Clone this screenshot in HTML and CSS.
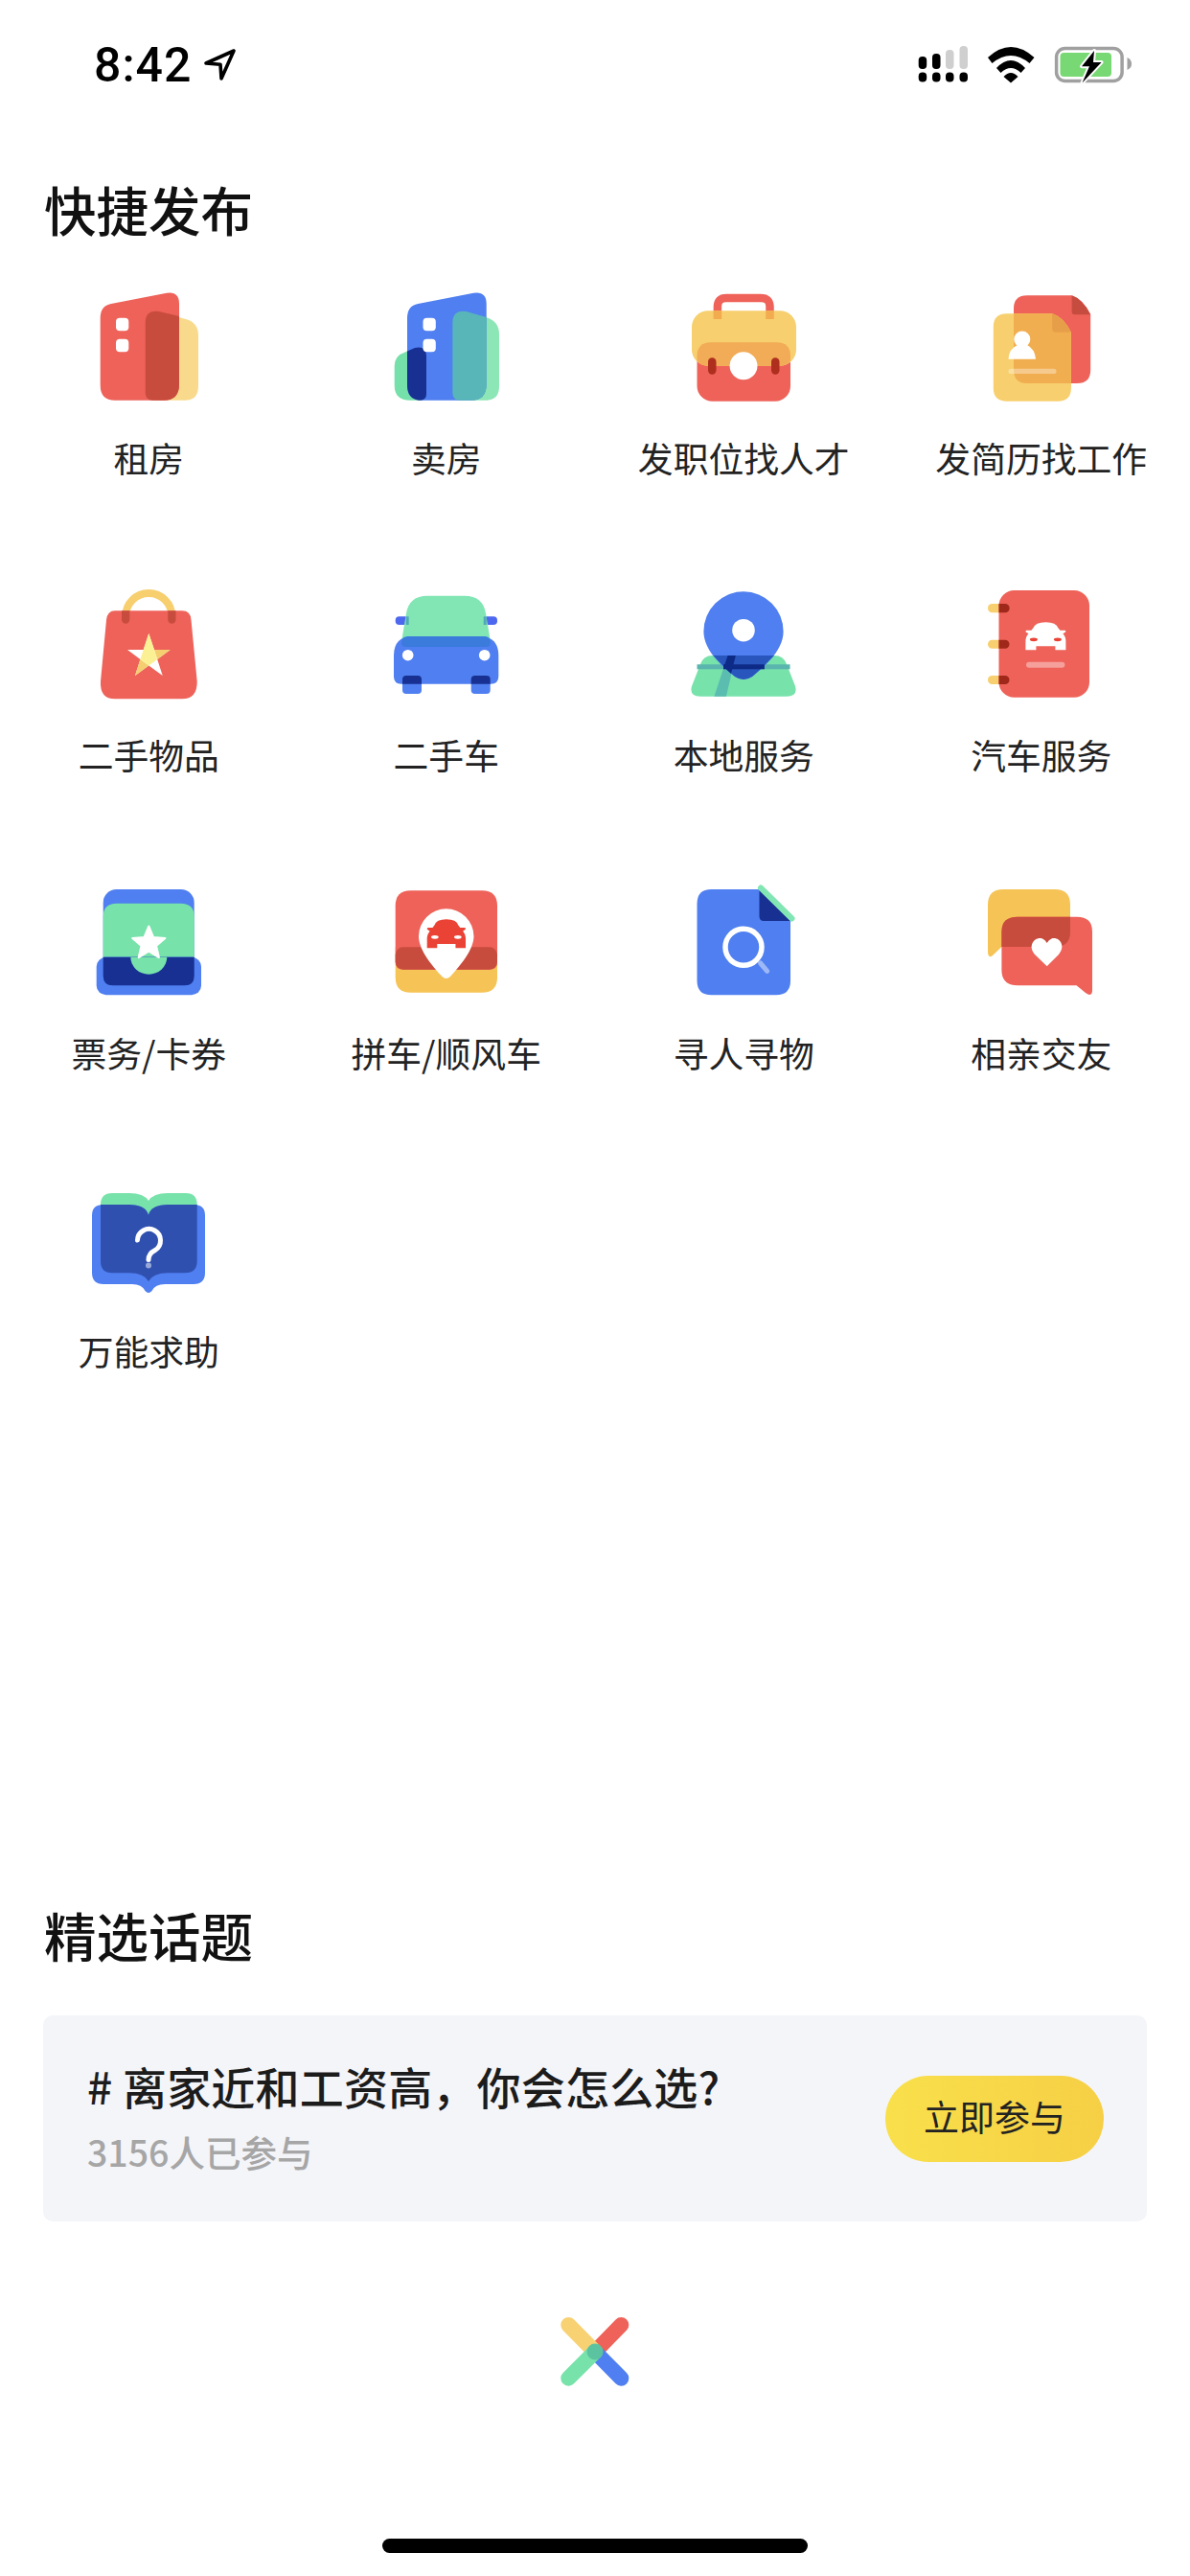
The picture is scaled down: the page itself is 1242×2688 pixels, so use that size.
FILE: index.html
```html
<!DOCTYPE html>
<html lang="zh-CN">
<head>
<meta charset="utf-8">
<title>快捷发布</title>
<link rel="stylesheet" href="styles.css">
</head>
<body>
<div class="page">
  <header class="status">
    <div class="time-wrap">
      <span class="time">8:42</span>
      <svg class="arrow" viewBox="210 48 40 40"><path d="M244 53 L215 66 L230 67.2 L231 82 Z" fill="none" stroke="#000" stroke-width="3.6" stroke-linejoin="round"/></svg>
    </div>
    <svg class="sys" viewBox="950 40 240 56">
      <g fill="#000">
        <rect x="958.7" y="59" width="8.5" height="13" rx="4"/><rect x="973" y="56" width="8.5" height="16" rx="4"/>
        <rect x="958.7" y="75.5" width="8.5" height="10" rx="4"/><rect x="973" y="75.5" width="8.5" height="10" rx="4"/><rect x="987" y="75.5" width="8.5" height="10" rx="4"/><rect x="1001.5" y="75.5" width="8.5" height="10" rx="4"/>
      </g>
      <rect x="987" y="52" width="8.5" height="20" rx="4" fill="#cfcfcf"/><rect x="1001.5" y="48" width="8.5" height="24" rx="4" fill="#cfcfcf"/>
      <path d="M1031 60 Q1055 38 1079.5 60 L1074.5 66 Q1055 50 1035.5 66Z M1040 71 Q1055 55 1070 71 L1065.5 76 Q1055 66 1044.5 76Z M1047.5 80 Q1055 72 1062.5 80 L1055 86.5Z" fill="#000"/>
      <rect x="1102.6" y="50.5" width="68.5" height="34" rx="9" fill="none" stroke="#a0a0a0" stroke-width="3.5"/>
      <rect x="1106.5" y="55" width="53.5" height="25" rx="4" fill="#78d873"/>
      <path d="M1176.5 60 Q1181 62 1181 66.5 Q1181 71 1176.5 73Z" fill="#a0a0a0"/>
      <path class="bolt" d="M1142 53 L1129 69.3 L1137 69.3 L1129.5 86.5 L1149.6 65 L1141 65 Z"/>
    </svg>
  </header>

  <h2 class="section-title title-quick">快捷发布</h2>

  <section class="grid">
    <div class="cell">
      <svg class="icon" viewBox="84 295 140 140">
        <path d="M151.7 337 Q151.7 323 166 325 L193 332.7 Q207 336 207 350 V403 Q207 417.7 193 417.7 H160 Q151.7 417.7 151.7 410 Z" fill="#f9da8d"/>
        <path d="M104.7 332 Q104.7 319 116 317 L174 305.7 Q187 303.7 187 317 V401 Q187 417.7 171 417.7 H120 Q104.7 417.7 104.7 402 Z" fill="#ee6259"/>
        <path d="M151.7 337 Q151.7 323 166 325 L187 330 V401 Q187 417.7 171 417.7 H160 Q151.7 417.7 151.7 410 Z" fill="#c84c3e"/>
        <rect x="121" y="331.7" width="13.3" height="13.6" rx="4" fill="#fff"/><rect x="121" y="353.7" width="13.3" height="13.6" rx="4" fill="#fff"/>
      </svg>
      <span class="label">租房</span>
    </div>
    <div class="cell">
      <svg class="icon" viewBox="395 295 140 140">
        <path d="M411.7 382 Q411.7 371 423.3 367.3 L433 363 Q445 360.5 445 372 V411 Q445 417.7 438 417.7 H428 Q411.7 417.7 411.7 402 Z" fill="#75e0a9"/>
        <path d="M472.3 337 Q472.3 323 486.5 325 L507 331 Q521 335 521 349 V403 Q521 417.7 507 417.7 H480.5 Q472.3 417.7 472.3 410 Z" fill="#8ce6b5"/>
        <path d="M425 332 Q425 319 436.3 317 L494.3 305.7 Q507.7 303.7 507.7 317 V401 Q507.7 417.7 491.7 417.7 H440.7 Q425 417.7 425 402 Z" fill="#4f7ff0"/>
        <path d="M472.3 337 Q472.3 323 486.5 325 L507.7 331 V401 Q507.7 417.7 491.7 417.7 H480.5 Q472.3 417.7 472.3 410 Z" fill="#58b6b9"/>
        <path d="M425 366.5 L433 363 Q445 360.5 445 372 V411 Q445 417.7 438 417.7 Q425 416.5 425 402 Z" fill="#173092"/>
        <rect x="441.5" y="331.7" width="13.3" height="13.6" rx="4" fill="#fff"/><rect x="441.5" y="353.7" width="13.3" height="13.6" rx="4" fill="#fff"/>
      </svg>
      <span class="label">卖房</span>
    </div>
    <div class="cell">
      <svg class="icon" viewBox="705 295 140 140">
        <path d="M748.9 333 V320 Q748.9 311 758 311 H794 Q803.5 311 803.5 320 V333" fill="none" stroke="#ee6259" stroke-width="8.5"/>
        <rect x="727.5" y="340" width="97.5" height="78.7" rx="16" fill="#ee6259"/>
        <rect x="722" y="324.3" width="109" height="57.4" rx="17" fill="#f7cf6e"/>
        <rect x="744.6" y="324.3" width="8.6" height="8.7" fill="#f2ab4f"/><rect x="799.2" y="324.3" width="8.6" height="8.7" fill="#f2ab4f"/>
        <path d="M727.5 372 Q727.5 357.3 742 357.3 H810.5 Q825 357.3 825 372 V376 Q822 381.7 813 381.7 H740 Q730 381.7 727.5 376 Z" fill="#f2ab56"/>
        <rect x="739" y="373.3" width="8.5" height="17.4" rx="4.2" fill="#ae2f1e"/><rect x="805" y="373.3" width="8.5" height="17.4" rx="4.2" fill="#ae2f1e"/>
        <circle cx="776" cy="381.7" r="14.5" fill="#fff"/>
      </svg>
      <span class="label">发职位找人才</span>
    </div>
    <div class="cell">
      <svg class="icon" viewBox="1016 295 140 140">
        <path d="M1072 308.3 H1118.6 Q1130 312 1138.2 328 V386 Q1138.2 400 1124 400 H1072 Q1058 400 1058 386 V322 Q1058 308.3 1072 308.3 Z" fill="#ee6259"/>
        <path d="M1118.6 308.3 Q1130 312 1138.2 328.3 H1122 Q1118.6 328.3 1118.6 325 Z" fill="#c74c40"/>
        <path d="M1051 327.3 H1098.2 Q1110 331 1117.9 346.7 V405 Q1117.9 418.7 1104 418.7 H1051 Q1036.8 418.7 1036.8 405 V341 Q1036.8 327.3 1051 327.3 Z" fill="#f7cf6e"/>
        <path d="M1058 327.3 H1098.2 Q1110 331 1117.9 346.7 V400 H1072 Q1058 400 1058 386 Z" fill="#f1ae50"/>
        <path d="M1098.2 327.3 Q1110 331 1117.9 346.7 H1102 Q1098.2 346.7 1098.2 343 Z" fill="#e79e48"/>
        <circle cx="1066.8" cy="354" r="8.5" fill="#fff"/>
        <path d="M1052.5 374.7 Q1053 364 1062 360 H1072 Q1080 364 1081 374.7 Z" fill="#fff"/>
        <rect x="1052.5" y="384.7" width="50" height="5.4" rx="2.7" fill="#fff" fill-opacity=".35"/>
      </svg>
      <span class="label">发简历找工作</span>
    </div>

    <div class="cell">
      <svg class="icon" viewBox="84 605 140 140">
        <path d="M131.2 645 V643 A24 24 0 0 1 179.3 643 V645" fill="none" stroke="#f7cf6e" stroke-width="8"/>
        <path d="M120 637.3 H190 Q199 637.3 199.5 647 L205.7 711 Q206 729.3 190 729.3 H120 Q104 729.3 105 711 L111 647 Q112 637.3 120 637.3 Z" fill="#ee6259"/>
        <path d="M127 637.3 H135.3 V646.5 A4.1 4.1 0 0 1 127 646.5 Z M175.2 637.3 H183.5 V646.5 A4.1 4.1 0 0 1 175.2 646.5 Z" fill="#c84c3e"/>
        <polygon points="155.3,661 161,678 177.7,678 164.2,688 169.7,705 155.3,694.5 141,705 146.4,688 133,678 149.7,678" fill="#fff"/>
        <polygon points="161,678 177.7,678 164.2,688" fill="#f4ce6f"/>
        <polygon points="155.3,694.5 141,705 146.4,688" fill="#f4ce6f"/>
        <polygon points="155.3,661 161,678 164.2,688 155.3,694.5 146.4,688 149.7,678" fill="#fbf094"/>
      </svg>
      <span class="label">二手物品</span>
    </div>
    <div class="cell">
      <svg class="icon" viewBox="395 605 140 140">
        <rect x="412.7" y="643.3" width="14" height="8.7" rx="4" fill="#4d68ee"/><rect x="504.7" y="643.3" width="14.3" height="8.7" rx="4" fill="#4d68ee"/>
        <path d="M419.3 668 L424 640 Q427 621.7 446 621.7 H485 Q504 621.7 507 640 L511.7 668 V672 Q511.7 675 508 675 H423 Q419.3 675 419.3 672 Z" fill="#82e6b4"/>
        <rect x="423.7" y="643.3" width="3" height="8.7" fill="#50a9b9"/><rect x="504.7" y="643.3" width="3" height="8.7" fill="#50a9b9"/>
        <rect x="420" y="700" width="20" height="24" rx="4" fill="#4f7ff0"/><rect x="491.7" y="700" width="20" height="24" rx="4" fill="#4f7ff0"/>
        <path d="M411 684 Q411 664 431 664 H500 Q520.3 664 520.3 684 V706 Q520.3 713.7 512 713.7 H419 Q411 713.7 411 706 Z" fill="#4f7ff0"/>
        <path d="M426 664 H505 Q511.7 664 511.7 670 V671 Q511.7 675 507 675 H424 Q419.3 675 419.3 671 V670 Q419.3 664 426 664 Z" fill="#3a7bdc"/>
        <circle cx="425.7" cy="683.7" r="5.8" fill="#fff"/><circle cx="505.7" cy="683.7" r="5.8" fill="#fff"/>
        <path d="M424 705 H436 Q440 705 440 709 V713.7 H420 V709 Q420 705 424 705 Z M495.7 705 H507.7 Q511.7 705 511.7 709 V713.7 H491.7 V709 Q491.7 705 495.7 705 Z" fill="#173092"/>
      </svg>
      <span class="label">二手车</span>
    </div>
    <div class="cell">
      <svg class="icon" viewBox="705 605 140 140">
        <path d="M744 684 H808 Q818 684 821 693 L830 716 Q833 726.7 821 726.7 H731 Q719 726.7 722 716 L731 693 Q734 684 744 684 Z" fill="#77e2aa"/>
        <rect x="727.5" y="693.3" width="97" height="5" fill="#5ab5ae"/>
        <polygon points="759.6,684 767.9,684 757.9,726.7 745.4,726.7" fill="#5bbcb0"/>
        <path d="M776 617.3 A41.6 41.6 0 0 1 817.6 659 C817.6 680 795 698 785 706 Q776 712 767 706 C757 698 734.4 680 734.4 659 A41.6 41.6 0 0 1 776 617.3 Z" fill="#4f7ff0"/>
        <path d="M744.6 684 H807.9 C800 692 792 700 785 706 Q776 712 767 706 C760 700 752 692 744.6 684 Z" fill="#2956bd"/>
        <rect x="755" y="693.3" width="42.9" height="5" fill="#0c2a86"/>
        <polygon points="759.6,684 767.9,684 763,703 755.5,696" fill="#0c2a86"/>
        <circle cx="776" cy="657.7" r="11.8" fill="#fff"/>
      </svg>
      <span class="label">本地服务</span>
    </div>
    <div class="cell">
      <svg class="icon" viewBox="1016 605 140 140">
        <rect x="1031" y="630" width="22.6" height="9.3" rx="4.6" fill="#f7cf6e"/><rect x="1031" y="667.7" width="22.6" height="9" rx="4.5" fill="#f7cf6e"/><rect x="1031" y="705" width="22.6" height="9" rx="4.5" fill="#f7cf6e"/>
        <rect x="1042.5" y="616" width="94.5" height="111.7" rx="16" fill="#ee6259"/>
        <path d="M1042.5 630 H1049 A4.6 4.6 0 0 1 1049 639.3 H1042.5 Z M1042.5 667.7 H1049 A4.5 4.5 0 0 1 1049 676.7 H1042.5 Z M1042.5 705 H1049 A4.5 4.5 0 0 1 1049 714 H1042.5 Z" fill="#a0281a"/>
        <g transform="translate(1070.4 649.3)">
          <path d="M8 6 Q10 0 21 0 Q32 0 34 6 L36 8.5 H41 Q42 8.5 42 10 L39 12 Q42 15 42 20 V29 H31 V25 H11 V29 H0 V20 Q0 15 3 12 L0 10 Q0 8.5 1 8.5 H6 Z" fill="#fff"/>
          <ellipse cx="8.5" cy="18" rx="4" ry="1.9" fill="#ea4335"/><ellipse cx="33.5" cy="18" rx="4" ry="1.9" fill="#ea4335"/>
        </g>
        <rect x="1071" y="690.7" width="40.4" height="6" rx="3" fill="#fff" fill-opacity=".4"/>
      </svg>
      <span class="label">汽车服务</span>
    </div>

    <div class="cell">
      <svg class="icon" viewBox="84 916 140 140">
        <rect x="107.7" y="928" width="95" height="100.3" rx="14" fill="#4f7ff0"/>
        <path d="M121.7 942.7 H188.7 Q202.7 942.7 202.7 956.7 V998.7 H107.7 V956.7 Q107.7 942.7 121.7 942.7 Z" fill="#77e2aa"/>
        <rect x="100.7" y="998.7" width="109.3" height="39.6" rx="10" fill="#4f7ff0"/>
        <path d="M107.7 998.7 H202.7 V1018.3 Q202.7 1028.3 192.7 1028.3 H117.7 Q107.7 1028.3 107.7 1018.3 Z" fill="#173092"/>
        <path d="M136.3 998.7 H174.3 A19 18 0 0 1 136.3 998.7 Z" fill="#77e2aa"/>
        <polygon points="155.3,966.5 160.1,977.9 172.4,978.9 163.1,987 165.9,999.1 155.3,992.7 144.7,999.1 147.5,987 138.2,978.9 150.5,977.9" fill="#fff" stroke="#fff" stroke-width="2" stroke-linejoin="round"/>
      </svg>
      <span class="label">票务/卡券</span>
    </div>
    <div class="cell">
      <svg class="icon" viewBox="395 916 140 140">
        <path d="M412.7 988.3 H519 V1019.7 Q519 1035.7 503 1035.7 H428.7 Q412.7 1035.7 412.7 1019.7 Z" fill="#f6c456"/>
        <path d="M428.7 929.3 H503 Q519 929.3 519 945.3 V1003.7 Q519 1011.7 511 1011.7 H420.7 Q412.7 1011.7 412.7 1003.7 V945.3 Q412.7 929.3 428.7 929.3 Z" fill="#ee6259"/>
        <rect x="412.7" y="988.3" width="106.3" height="23.4" rx="8" fill="#c84c3e"/>
        <path d="M465.7 948.3 A28.8 28.8 0 0 1 494.5 977 C494.5 992 478 1010 470 1019 Q465.7 1023 461.5 1019 C453 1010 437 992 437 977 A28.8 28.8 0 0 1 465.7 948.3 Z" fill="#fff"/>
        <g transform="translate(445.7 959.3) scale(.96 1.03)">
          <path d="M8 6 Q10 0 21 0 Q32 0 34 6 L36 8.5 H41 Q42 8.5 42 10 L39 12 Q42 15 42 20 V29 H31 V25 H11 V29 H0 V20 Q0 15 3 12 L0 10 Q0 8.5 1 8.5 H6 Z" fill="#ea4335"/>
          <ellipse cx="8.5" cy="18" rx="4" ry="1.9" fill="#fff"/><ellipse cx="33.5" cy="18" rx="4" ry="1.9" fill="#fff"/>
        </g>
      </svg>
      <span class="label">拼车/顺风车</span>
    </div>
    <div class="cell">
      <svg class="icon" viewBox="705 916 140 140">
        <path d="M742.5 928 H792.5 L825 960 V1023.3 Q825 1038.3 810 1038.3 H742.5 Q727.5 1038.3 727.5 1023.3 V943 Q727.5 928 742.5 928 Z" fill="#4f7ff0"/>
        <path d="M792.5 928 L825 961 H797 Q792.5 961 792.5 956 Z" fill="#173092"/>
        <line x1="794" y1="926.5" x2="826.5" y2="958.5" stroke="#82e6b4" stroke-width="6" stroke-linecap="round"/>
        <circle cx="776" cy="988.3" r="19" fill="none" stroke="#fff" stroke-width="5.5"/>
        <line x1="793.6" y1="1005" x2="800.7" y2="1013.3" stroke="#fff" stroke-opacity=".45" stroke-width="5" stroke-linecap="round"/>
      </svg>
      <span class="label">寻人寻物</span>
    </div>
    <div class="cell">
      <svg class="icon" viewBox="1016 916 140 140">
        <path d="M1047 928 H1101 Q1117 928 1117 944 V972 Q1117 988 1101 988 H1045.4 L1036 997 Q1031 1001 1031 992 V944 Q1031 928 1047 928 Z" fill="#f6c456"/>
        <path d="M1062 956.7 H1124 Q1140 956.7 1140 972 V1033 Q1140 1041 1133 1036 L1123.5 1028.3 H1062 Q1045.4 1028.3 1045.4 1012 V972 Q1045.4 956.7 1062 956.7 Z" fill="#ee6259"/>
        <path d="M1062 956.7 H1117 V972 Q1117 988 1101 988 H1045.4 V972 Q1045.4 956.7 1062 956.7 Z" fill="#c84c3e"/>
        <path d="M1092.7 1008.3 L1080 996 C1072 987 1080 977 1088 979.5 Q1091 980.5 1092.7 984 Q1094.5 980.5 1097.5 979.5 C1105.5 977 1113 987 1105 996 Z" fill="#fff"/>
      </svg>
      <span class="label">相亲交友</span>
    </div>

    <div class="cell">
      <svg class="icon" viewBox="84 1227 140 140">
        <path d="M117 1245 H135 Q150 1245 155 1253 Q160 1245 175 1245 H194 Q205.7 1245 205.7 1257 V1270 H105 V1257 Q105 1245 117 1245 Z" fill="#77e2aa"/>
        <path d="M108 1257 H135 C150 1258 153 1262 155 1268 C157 1262 160 1258 175 1257 H202 Q214 1257 214 1268 V1328 Q214 1340 202 1340 H172 Q162 1340 158.5 1347 Q155 1351 151.5 1347 Q148 1340 138 1340 H108 Q96 1340 96 1328 V1268 Q96 1257 108 1257 Z" fill="#4f7ff0"/>
        <path d="M105 1257 H135 C150 1258 153 1262 155 1268 C157 1262 160 1258 175 1257 H205.7 V1316 Q205.7 1328.3 193 1328.3 H175 Q160 1328.3 155 1337 Q150 1328.3 135 1328.3 H117 Q105 1328.3 105 1316 Z" fill="#3050b0"/>
        <path d="M143.5 1294 A12 12 0 1 1 162 1304.5 Q155 1308 155 1314.5" fill="none" stroke="#fff" stroke-width="5" stroke-linecap="round"/>
        <circle cx="155" cy="1320.5" r="3" fill="#fff" fill-opacity=".5"/>
      </svg>
      <span class="label">万能求助</span>
    </div>
  </section>

  <h2 class="section-title title-topic">精选话题</h2>

  <section class="topic">
    <div class="topic-text">
      <div class="topic-title"># 离家近和工资高，你会怎么选?</div>
      <div class="topic-sub">3156人已参与</div>
    </div>
    <button class="join"><span class="join-text">立即参与</span></button>
  </section>

  <div class="logo-row">
    <svg class="logo" viewBox="581 2413 81 81">
      <line x1="648.3" y1="2426" x2="621" y2="2454" stroke="#ee6259" stroke-width="16" stroke-linecap="round"/>
      <line x1="648.3" y1="2481.7" x2="621" y2="2454" stroke="#4f7ff0" stroke-width="16" stroke-linecap="round"/>
      <line x1="593.3" y1="2426" x2="621" y2="2454" stroke="#f8d173" stroke-width="16" stroke-linecap="round"/>
      <line x1="593.3" y1="2481.7" x2="621" y2="2454" stroke="#77e2aa" stroke-width="16" stroke-linecap="round"/>
      <circle cx="621" cy="2454" r="8.5" fill="#5cc3a0"/>
    </svg>
  </div>

  <div class="home-row"><div class="home-bar"></div></div>
</div>
</body>
</html>
```
FILE: styles.css
```css
* { box-sizing: border-box; }
html, body { margin: 0; padding: 0; background: #fff; }
body { font-family: "Noto Sans CJK SC", "Noto Sans", sans-serif; color: #222; }
.page { width: 1242px; height: 2688px; overflow: hidden; }

.status { height: 100px; padding: 40px 0 0 98px; display: flex; justify-content: space-between; align-items: flex-start; }
.time-wrap { display: flex; align-items: flex-start; }
.time { font-family: Roboto, sans-serif; font-weight: 500; font-size: 50px; line-height: 56px; letter-spacing: 1px; color: #000; }
.arrow { width: 40px; height: 40px; margin: 8px 0 0 10px; display: block; }
.sys { width: 240px; height: 56px; margin: 0 52px 0 0; display: block; }
.bolt { fill: #000; stroke: #fff; stroke-width: 4; paint-order: stroke; stroke-linejoin: round; }

.section-title { margin: 0; padding-left: 46px; font-size: 54.5px; line-height: 60px; font-weight: 500; color: #111; }
.title-quick { margin-top: 88px; }
.title-topic { margin-top: 11px; }

.grid { display: grid; grid-template-columns: repeat(4, 310.5px); grid-template-rows: 310px 311px 311px 311px; margin: 47px 0 0 -1px; height: 1683px; align-content: start; }
.cell { display: flex; flex-direction: column; align-items: center; }
.icon { width: 140px; height: 140px; display: block; flex: none; }
.label { font-size: 36.8px; line-height: 50px; margin-top: 17px; padding-left: 2px; white-space: nowrap; color: #222; }

.topic { margin: 54px 0 0 45px; width: 1152px; height: 215px; background: #f4f5f9; border-radius: 10px; display: flex; align-items: center; justify-content: space-between; padding: 0 45px 0 46px; }
.topic-text { padding-bottom: 6px; }
.topic-title { font-size: 46px; line-height: 60px; font-weight: 500; letter-spacing: .2px; color: #1c1c1c; }
.topic-sub { font-size: 37.5px; line-height: 50px; font-weight: 500; color: #a6a6a6; margin-top: 14px; }
.join { width: 228px; height: 90px; border: 0; border-radius: 45px; background: linear-gradient(90deg, #f9e04b, #f6cf45); font-family: inherit; font-size: 37px; color: #222; padding: 0 0 5px; }
.join-text { display: block; }

.logo-row { display: flex; justify-content: center; margin-top: 95px; padding-left: 1px; }
.logo { width: 81px; height: 81px; display: block; }
.home-row { display: flex; justify-content: center; margin-top: 155px; }
.home-bar { width: 444px; height: 15px; background: #000; border-radius: 8px; }
```
